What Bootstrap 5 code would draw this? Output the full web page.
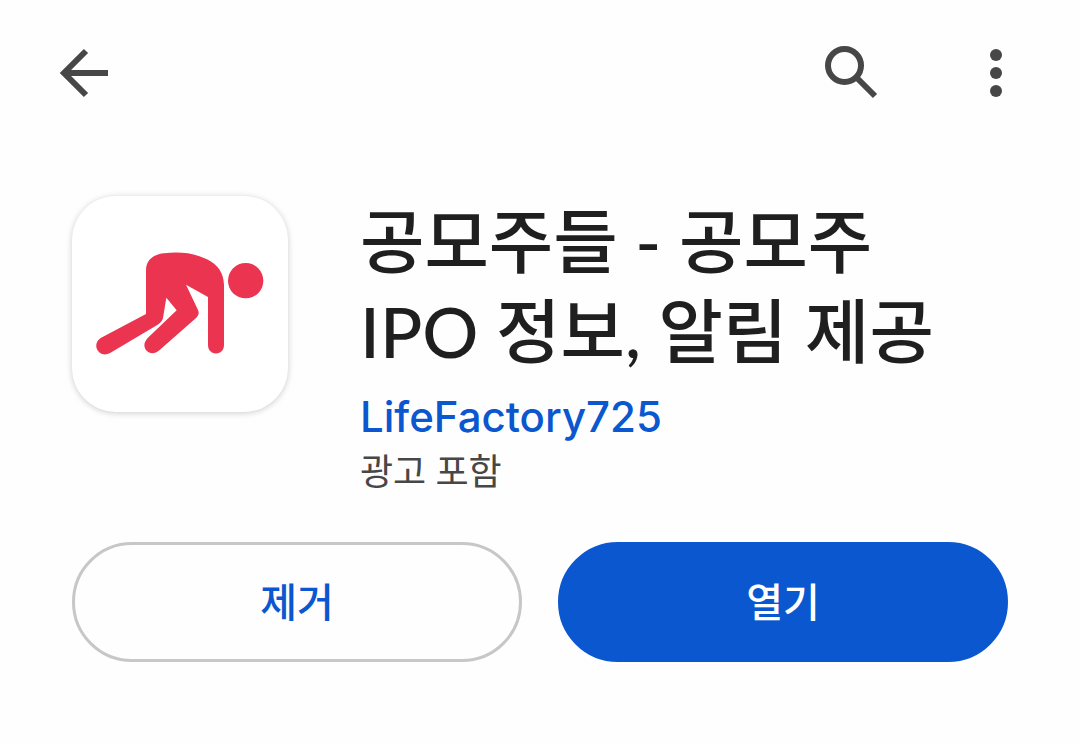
<!DOCTYPE html>
<html lang="ko">
<head>
<meta charset="utf-8">
<meta name="viewport" content="width=device-width, initial-scale=1">
<title>공모주들 - 공모주 IPO 정보, 알림 제공</title>
<link href="https://cdn.jsdelivr.net/npm/bootstrap@5.3.0/dist/css/bootstrap.min.css" rel="stylesheet">
<style>
  body { background: #fefefe; color: #1f1f1f; font-family: Lato, "Noto Sans CJK KR", sans-serif; }
  .store-bar { padding: 36px 48px 0; }
  .tool-btn { width: 72px; height: 72px; color: #474747; line-height: 1; }
  .tool-gap { gap: 72px; }
  .listing { padding: 88px 72px 0; gap: 72px; }
  .app-tile { width: 216px; height: 216px; border-radius: 44px; background: #fff; box-shadow: 0 1px 6px rgba(0, 0, 0, .2); }
  .app-title { font-size: 70px; line-height: 90px; font-weight: 500; }
  .developer { margin-top: 14px; font-family: Inter, sans-serif; font-size: 42px; line-height: 54px; font-weight: 500; color: #0b57cf; }
  .ads-note { font-size: 36px; line-height: 54px; color: #474747; }
  .actions { padding: 44px 72px 0; gap: 36px; }
  .action-btn { height: 120px; font-size: 40px; font-weight: 500; border: 3px solid #c7c7c7; color: #0b57cf; }
  .action-open { background: #0b57cf; border-color: #0b57cf; color: #fff; }
</style>
</head>
<body>
<header class="store-bar d-flex justify-content-between">
  <button type="button" class="tool-btn btn border-0 p-0" aria-label="뒤로">
    <svg width="72" height="72" viewBox="0 0 72 72" fill="none" stroke="currentColor" stroke-width="6"><path d="M60 37H17M38 15L16 37L38 59"/></svg>
  </button>
  <div class="d-flex tool-gap">
    <button type="button" class="tool-btn btn border-0 p-0" aria-label="검색">
      <svg width="72" height="72" viewBox="0 0 72 72" fill="none" stroke="currentColor" stroke-width="6"><circle cx="28.500" cy="29.500" r="16.500"/><path d="M40 41L59 60"/></svg>
    </button>
    <button type="button" class="tool-btn btn border-0 p-0" aria-label="메뉴 더보기">
      <svg width="72" height="72" viewBox="0 0 72 72" fill="currentColor"><circle cx="36" cy="19" r="6"/><circle cx="36" cy="37" r="6"/><circle cx="36" cy="55" r="6"/></svg>
    </button>
  </div>
</header>
<main>
  <section class="listing d-flex align-items-start">
    <div class="app-tile flex-shrink-0">
      <svg width="216" height="216" viewBox="36 47 648 648" fill="#ea3450" role="img" aria-label="공모주들">
        <circle cx="557" cy="301" r="53"/>
        <path d="M258 270C258 239 280 222 312 219C362 213 405 219 441 237C475 253 491 280 492 314V494C492 528 444 528 444 494V350L378 313L414 389Q420 402 409 412L298 510C270 534 236 502 263 473L350 390L319 352L309 413Q306 426 293 433L149 519C118 534 92 494 122 473L258 401Z"/>
      </svg>
    </div>
    <div>
      <h1 class="app-title mb-0">공모주들 - 공모주<br>IPO 정보, 알림 제공</h1>
      <a href="#" class="developer d-block text-decoration-none">LifeFactory725</a>
      <p class="ads-note mb-0">광고 포함</p>
    </div>
  </section>
  <section class="actions d-flex">
    <button type="button" class="action-btn btn rounded-pill flex-fill w-50">제거</button>
    <button type="button" class="action-btn action-open btn rounded-pill flex-fill w-50">열기</button>
  </section>
</main>
<script src="https://cdn.jsdelivr.net/npm/bootstrap@5.3.0/dist/js/bootstrap.bundle.min.js"></script>
</body>
</html>
